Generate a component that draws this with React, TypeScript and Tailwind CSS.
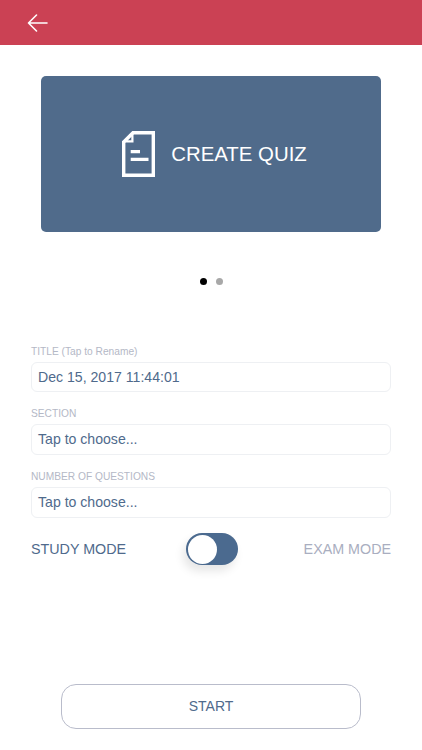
export default function App() {
  const Field = ({ label, value, className }: { label: string; value: string; className: string }) => (
    <div className={className}>
      <div className="h-[13px] text-[10.2px] leading-[13px] text-[#b4b8c6]">{label}</div>
      <div className="mt-[4px] h-[30.5px] rounded-[6px] border border-[#eef0f3] pl-[6px] text-[14.1px] leading-[28px] text-[#4f6a8c]">
        {value}
      </div>
    </div>
  );

  return (
    <div className="flex h-[750px] w-[422px] flex-col overflow-hidden bg-white font-['Liberation_Sans',Arial,sans-serif]">
      <header className="flex h-[45px] items-center bg-[#cb4154] pl-[27px]">
        <svg width="21" height="18" viewBox="0 0 21 18" fill="none" stroke="#fff" strokeWidth="1.6" strokeLinecap="round" strokeLinejoin="round">
          <path d="M20 9H1.5M9.5 1L1.5 9l8 8" />
        </svg>
      </header>

      <section className="mx-[41px] mt-[31px] flex h-[156px] items-center justify-center gap-[16px] rounded-[5px] bg-[#506b8b] pl-[7px]">
        <svg width="33" height="46" viewBox="0 0 33 46" fill="none" stroke="#fff">
          <path d="M11 1.7H31.3V44.3H1.7V11Z" strokeWidth="3.4" strokeLinejoin="miter" />
          <path d="M10 2L2 10V11.5H11.5V2ZM5.5 9.3L9.3 5.3V9.3Z" fill="#fff" fillRule="evenodd" stroke="none" />
          <path d="M8.7 20.7H18M8.7 28.3H26.5" strokeWidth="3.2" />
        </svg>
        <span className="text-[20.4px] leading-none text-white">CREATE QUIZ</span>
      </section>

      <div className="mt-[46px] flex h-[7px] justify-center gap-[9px]">
        <span className="h-[7px] w-[7px] rounded-full bg-black" />
        <span className="h-[7px] w-[7px] rounded-full bg-[#a8a8a8]" />
      </div>

      <Field className="mx-[31px] mt-[59.7px]" label="TITLE (Tap to Rename)" value="Dec 15, 2017 11:44:01" />
      <Field className="mx-[31px] mt-[15.3px]" label="SECTION" value="Tap to choose..." />
      <Field className="mx-[31px] mt-[15.3px]" label="NUMBER OF QUESTIONS" value="Tap to choose..." />

      <div className="mx-[31px] mt-[15.2px] grid h-[33px] grid-cols-[155px_52px_1fr] items-center text-[14.3px]">
        <span className="text-[#4f6a8c]">STUDY MODE</span>
        <div className="flex h-[32px] w-[52px] items-center rounded-full bg-[#4b6a8f] pl-[1.5px] shadow-[-3px_6px_10px_rgba(0,0,0,0.1)]">
          <span className="h-[29px] w-[29px] rounded-full bg-white" />
        </div>
        <span className="text-right text-[#a9aec0]">EXAM MODE</span>
      </div>

      <button className="mx-[61px] mt-[118px] h-[45px] rounded-[15px] border border-[#b9bccb] bg-white text-[14px] text-[#4f6a8c]">
        START
      </button>
    </div>
  );
}
